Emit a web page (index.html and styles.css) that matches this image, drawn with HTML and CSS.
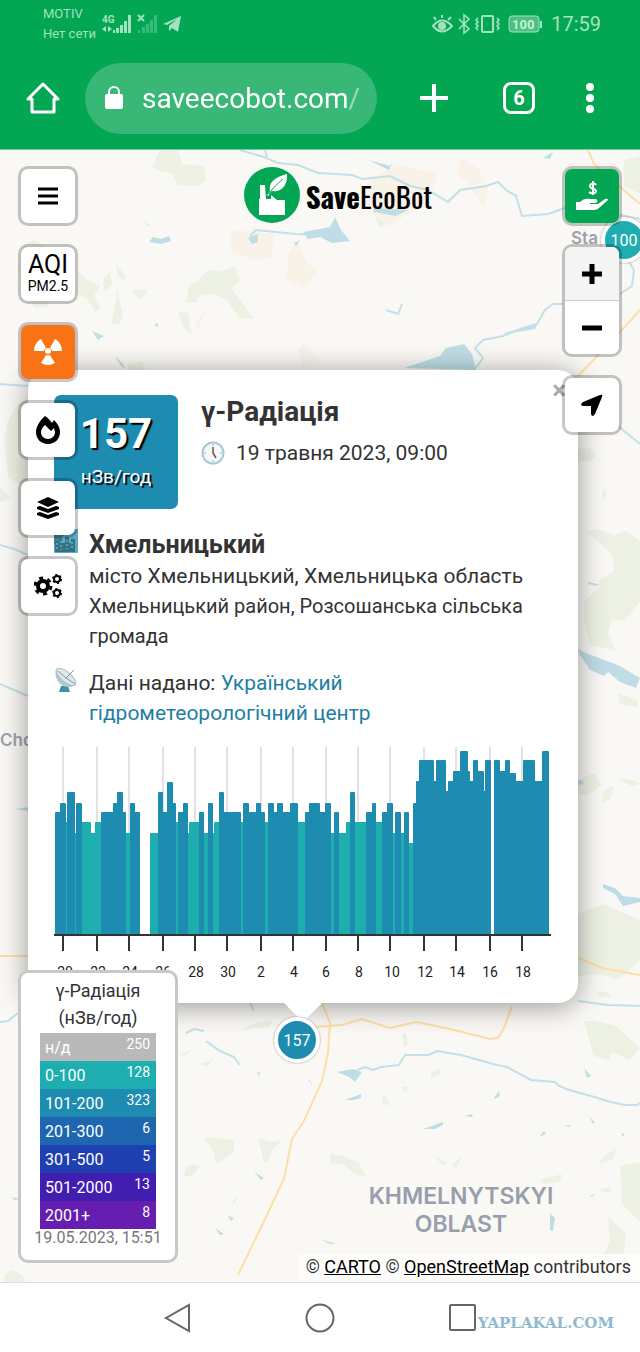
FILE: index.html
```html
<!DOCTYPE html>
<html lang="uk">
<head>
  <meta charset="UTF-8">
  <meta name="viewport" content="width=device-width, initial-scale=1">
  <title>SaveEcoBot</title>
  <link rel="stylesheet" href="styles.css">
</head>
<body>

  <header class="browser">
    <div class="status">
      <div class="carrier">MOTIV<br>Нет сети</div>
      <svg class="signal" width="82" height="24" viewBox="0 0 82 24">
        <text x="0" y="11" class="net">4G</text>
        <path d="M0 17l4-3v6zM10 17l-4-3v6zM11 18h2v3h-2zM14 16h3v5h-3zM18 13h3v8h-3zM22 9h3v12h-3zM26 3h3v18h-3z"/>
        <path d="M36 3l6 6M42 3l-6 6" stroke="#a3e2bf" stroke-width="2"/>
        <path opacity=".35" d="M36 18h2v3h-2zM40 15h3v6h-3zM44 12h3v9h-3zM48 8h3v13h-3zM52 3h3v18h-3z"/>
        <path d="M61 12L79 4 76 20 70 16 67 19V14L75 7 65 13z"/>
      </svg>
      <svg class="indicators" width="110" height="24" viewBox="0 0 110 24" fill="none" stroke="#a3e2bf" stroke-width="2">
        <path d="M1 14Q10 3 20 14Q10 25 1 14zM4 8L2 5M10 6V3M16 8l3-3"/>
        <circle cx="10" cy="14" r="3" fill="#a3e2bf"/>
        <path d="M27 7l10 10-5 4V3l5 4L27 17" stroke-width="1.6"/>
        <rect x="50" y="4" width="11" height="16" rx="1"/>
        <path d="M46 6l-2 2 2 2-2 2 2 2-2 2 2 2M65 6l2 2-2 2 2 2-2 2 2 2-2 2" stroke-width="1.6"/>
        <rect x="77" y="4" width="30" height="16" rx="3" stroke-width="1" fill="#4dbf83"/>
        <path d="M109 9v7"/>
        <text x="80" y="17" class="battery">100</text>
      </svg>
      <time class="clock">17:59</time>
    </div>
    <div class="toolbar">
      <button class="tool" aria-label="Home">
        <svg width="34" height="34" viewBox="0 0 34 34" fill="none" stroke="#fff" stroke-width="3" stroke-linejoin="round" stroke-linecap="round">
          <path d="M2 18L17 3 32 18H28V31H6V18z"/>
        </svg>
      </button>
      <div class="address">
        <svg width="20" height="26" viewBox="0 0 20 26">
          <path d="M5 10V7a5 5 0 0 1 10 0v3" fill="none" stroke="#fff" stroke-width="2"/>
          <rect x="1" y="9" width="18" height="15" rx="2" fill="#fff"/>
        </svg>
        <input type="text" value="saveecobot.com/" aria-label="Address">
      </div>
      <button class="tool plus" aria-label="New tab">
        <svg width="30" height="30" viewBox="0 0 30 30" stroke="#fff" stroke-width="4"><path d="M15 1v28M1 15h28"/></svg>
      </button>
      <button class="tool" aria-label="Tabs"><span class="tabs">6</span></button>
      <button class="tool more" aria-label="More">
        <svg width="10" height="30" viewBox="0 0 10 30" fill="#fff"><circle cx="5" cy="4" r="4"/><circle cx="5" cy="15" r="4"/><circle cx="5" cy="26" r="4"/></svg>
      </button>
    </div>
  </header>

  <main class="map">
    <svg class="tiles" viewBox="0 150 640 1132" preserveAspectRatio="xMidYMin slice">
      <!-- forests -->
      <g class="forest">
        <path d="M160 150h18l4 14 22 2 2 15-8 5-20-1-6-12-12-2-8-4z"/>
        <path d="M22 246l12-6 14 8v58l-14 2-16-40z"/>
        <path d="M78 272l10 8 12 6-6 10 6 12-4 4-10-14-8-4zM104 278l6-6 2 12-6 8-3-6zM116 264l10 12-2 4-6-4zM131 290l14-1 2 5-8 6zM117 290l6 26-4 8-8 1 4-20z"/>
        <path d="M208 270l15 1 12-5 5 14-8 9 22 30-14-1-14-18-12-6-14 2-4 7-10-1 3-16 8-4z"/>
        <path d="M178 312l10 1 4 22-8-6zM128 364l14-2 4 8h-18z"/>
        <path d="M624 160l16-4v38l-16-8zM374 215l6-4 5 15-6 1z"/>
        <path d="M578 449l12-1 6 8-6 5h-12zM604 488l3 6-2 6-3-6z"/>
        <path d="M586 532l12-3 16 6 12-4 14 10v60l-16 20-12-2-4 14 8 18-26-6-6-24v-20l16-14-2-6 16-10-2-16-14-14z"/>
        <path d="M618 693l20 8v6l-18-3zM578 780l16-7 8 12-14 10-10-1zM604 790l10-4-4 14-8 3zM616 778l18 2 6 4-8 2z"/>
        <path d="M578 914l26-10 36 16v40l-22 20-20-6-20 2z"/>
        <path d="M8 420l10-16 10-6v90l-20-10-4-40zM0 488l12 10-12 4z"/>
        <path d="M584 1021h12l20 5 24 22-10 12-18-8-2 8-16-4zM242 1028l18-6 12-1-2 6-26 3zM402 1034l4-1 2 12-4 3zM198 1064l10-3 6-4-6 10zM180 1054l10-4-4 6z"/>
        <path d="M204 1137l30 3v12l-18 12-2-11zM258 1138l12 4 12-2-10 10-4 12-4 1zM186 1168l6-4 8 2-8 10h-8zM431 1073l10-6-2 8-8 3zM402 1086l8 1-6 6zM384 1093l6 12-8-1z"/>
        <path d="M330 1154l14 2 14 6 8 14-10-1-12-10-14-2zM433 1155l14 8-4 3zM452 1164l10-7-6 12zM540 1180l22-6-2 8-16 2zM600 1160l17-13-4 12-12 5zM620 1166l20-4v60l-18-18zM608 1216l18 18-2 20h-20l6-12z"/>
        <path d="M60 1262l10-5 4 5zM5 1275l8-5 10 6 2 6H4zM596 1190l14-3 2 6zM596 993l10-2 6 6-12 1z"/>
      </g>
      <g class="sand">
        <path d="M230 230l44 4-2 24-18 2-22-8zM288 256l8-14 12 22 10 6-14 18-18-9 2-16zM462 158l16 10 8 14-16 4-14-14zM370 180l28-16 40 10-10 28-40 24-26-20zM472 190l16-4-4 22zM196 324l12-18-10 24zM298 350l6-8 18 22-20 4z"/>
      </g>
      <!-- lakes -->
      <g class="lake">
        <path d="M404 368l36-12 6-8 18-4 8 10 4 16zM320 229l10-2 5-10 6 13 9 11-18 2-12-6zM303 232l17-3v8l-12 2zM374 208l34 2-12 6-22-4zM248 238l10-4v8l-6 2zM153 237l8 2 8-3 2 5-10 3-12-2z"/>
        <path d="M143 221l8 5-3-1zM92 331l12 5-6 4zM115 356l8 8 3 5-5-3zM154 325l4-2v4zM368 160l22 6 3-4-4 8zM543 158l10-6-3 7zM294 243l6-3-4 6zM504 333l30-8 5-4-4 8-30 5z"/>
        <path d="M578 652l16 4 26 10 20 12-4 10-16-6-12-10-4 4-14-6zM603 884l12 4 8 8 17 2v4l-17 4-8-12-12-6zM337 1072l16-3 9 3-7 10-6-5zM345 1100l16-6v4l-8 2zM423 1129l20-7v3l-8 4zM464 1116l9-2-1 3zM494 1098l5-7 1 5-5 3zM584 1068l7 8-4 2zM539 1137l5-6 2 3zM564 1126l8-1-3 2zM589 1116l6 7-2 1zM550 1213l5 5-2 13-3-1z"/>
        <path d="M320 1239l16 5h-6zM254 1172l10 6-3 2zM215 1228l9 6-4 1zM228 1216l6 2-3 3zM232 1203l6-7-4 6zM320 1243l16 2zM12 1197l8 2-6 1zM15 809l14-2v4zM578 780l5 1v3l-5 1zM630 771l10-2zM257 1073l3-1-1 4zM307 1078l4 4 1 3zM590 1196l5-2-3 3zM622 1133l3 1-3 3z"/>
      </g>
      <g class="river">
        <path d="M240 150l24 7 14 6 20 2 20 8 34 2 10 4 28-3 20 10 18 4 20 12 12-12 26-4 12-4 8 8 10 6 6 20 26-2 28-10 8 4"/>
        <path d="M250 236l6-6 40 4 26 1M265 150l2 7M620 215l20 4M628 260l6 10-2 16-12 8M563 304l-10 0-8 6-8 14-14 4-20 8-20 4-8 8 8 10-6 8-6 6M386 310l12 4 4-10M618 426l22 18"/>
        <path d="M0 384l28 2M0 545l14 4 14 6M0 684l14 6 14 6M578 650l16 8M588 583l10 2M578 1001l30 4 32 1M0 1022l8-1 10-8M186 1033l8-4 10 2M206 1041l14 10 14 6 6 8M250 1003l4 8"/>
        <path d="M357 1070l8-3 8 3 8-3 18-2 6-10h24l8-4 24 4 36 10 10 2 24 13 24 2 4 4 10 4 22 6 20 6 14 3h12l3-2"/>
      </g>
      <g class="road">
        <path d="M588 150l6 14 46 40M640 310l-20 22-42 44M0 956h28M578 958l24 10 38 7M322 1003l8 20-2 30-6 28-18 40-12 18-8 40-18 38-28 58M316 1027l26-2 20-6 28 9 26-6 34 7 40 10 8-1 6-10 8-22"/>
      </g>
      <text x="571" y="244" class="place">Sta</text>
      <text x="0" y="746" class="place">Cho</text>
      <text x="461" y="1204" class="region">KHMELNYTSKYI</text>
      <text x="461" y="1232" class="region">OBLAST</text>
    </svg>

    <div class="logo">
      <svg width="56" height="56" viewBox="0 0 56 56">
        <circle cx="28" cy="28" r="28" fill="#02a653"/>
        <path d="M16 18h5l1 14h5V28l6 5h8v15H15V32h1z" fill="#fff"/>
        <path d="M26 25c-2-10 5-15 17-18 1 10-5 19-15 17l-4 5-1-1z" fill="#fff"/>
        <path d="M25 27c4-6 8-10 14-15" stroke="#02a653" fill="none"/>
      </svg>
      <span><b>Save</b>EcoBot</span>
    </div>

    <article class="popup">
      <button class="close" aria-label="Close">×</button>
      <div class="top">
        <div class="badge"><strong>157</strong><span>нЗв/год</span></div>
        <div>
          <h1>γ-Радіація</h1>
          <p class="date">
            <svg width="24" height="24" viewBox="0 0 24 24">
              <circle cx="12" cy="12" r="10.5" fill="#f3f7f8" stroke="#a5c9d3" stroke-width="2"/>
              <path d="M12 3v2M12 19v2M3 12h2M19 12h2" stroke="#9ab"/>
              <path d="M12 6v6l3 5" fill="none" stroke="#7d4b4b" stroke-width="1.5"/>
            </svg>
            19 травня 2023, 09:00
          </p>
        </div>
      </div>
      <div class="info">
        <svg width="24" height="24" viewBox="0 0 24 24">
          <rect width="24" height="24" rx="1" fill="#5cabc4"/>
          <path d="M0 0h16L0 16z" fill="#3a7f93"/>
          <path d="M1 23V12h4V9h3v5h3V8h4v6h2v-4h4v13z" fill="#347284"/>
          <path d="M3 14v7M7 12v9M13 11v9M18 13v8" stroke="#8cc9d6" stroke-dasharray="2 2"/>
        </svg>
        <div>
          <h2>Хмельницький</h2>
          <p>місто Хмельницький, Хмельницька область</p>
          <p class="small">Хмельницький район, Розсошанська сільська громада</p>
        </div>
      </div>
      <div class="info source">
        <svg width="24" height="26" viewBox="0 0 24 26">
          <path d="M7 18h7l2 6H5z" fill="#3b90ab"/>
          <path d="M2 1C-1 12 9 24 22 17z" fill="#b4c8ce"/>
          <ellipse cx="12" cy="9" rx="12" ry="5" transform="rotate(40 12 9)" fill="#dfe8ea" stroke="#a5bbc2"/>
          <path d="M12 10l8-8M12 10l9 6M12 10L4 3" fill="none" stroke="#8498a0"/>
        </svg>
        <p>Дані надано: <a href="#">Український гідрометеорологічний центр</a></p>
      </div>

      <svg class="chart" viewBox="54 745 497 236" role="img" aria-label="γ-Радіація, нЗв/год">
        <path class="grid" d="M63 747v188M97 747v188M129 747v188M163 747v188M195 747v188M227 747v188M261 747v188M293 747v188M326 747v188M358 747v188M390 747v188M424 747v188M456 747v188M490 747v188M522 747v188"/>
        <path class="low" d="M64 935V823H67V935zM74 935V834H77V935zM81 935V823H90V834H96V823H102V935zM126 935V834H131V935zM151 935V834H159V935zM174 935V823H178V935zM187 935V834H190V823H200V935zM203 935V834H208V935zM212 935V834H215V823H220V935zM240 935V823H244V935zM265 935V823H269V935zM298 935V823H306V935zM330 935V834H335V935zM338 935V834H347V823H351V935zM354 935V823H367V935zM375 935V823H383V935zM391 935V834H395V935zM400 935V834H405V935zM408 935V844H413V935z"/>
        <path class="mid" d="M56 935V813H61V804H65V935zM68 935V793H74V935zM77 935V804H81V935zM102 935V813H114V804H118V793H122V813H125V935zM131 935V804H134V813H139V935zM159 935V793H162V813H168V783H172V804H175V935zM179 935V813H184V804H187V935zM200 935V813H203V935zM209 935V804H212V935zM220 935V793H223V813H240V935zM244 935V804H248V813H257V804H260V813H264V935zM269 935V804H273V813H278V804H282V813H291V804H297V935zM306 935V813H310V804H319V813H326V804H330V935zM335 935V813H338V935zM351 935V793H354V935zM367 935V813H373V804H375V935zM383 935V813H388V804H392V935zM396 935V813H400V935zM405 935V813H408V935z"/>
        <path class="mid" d="M414 935V804H417V782H420V761H433V782H437V761H445V792H449V782H454V772H461V752H467V772H469V782H474V761H477V772H483V792H486V761H490V935zM495 935V761H499V772H506V761H509V774H515V782H524V761H534V782H543V752H548V935z"/>
        <path class="axis" d="M54 935h497M63 935v16M97 935v16M129 935v16M163 935v16M195 935v16M227 935v16M261 935v16M293 935v16M326 935v16M358 935v16M390 935v16M424 935v16M456 935v16M490 935v16M522 935v16"/>
        <g class="days">
          <text x="65" y="977">20</text><text x="98" y="977">22</text><text x="130" y="977">24</text><text x="163" y="977">26</text><text x="196" y="977">28</text>
          <text x="228" y="977">30</text><text x="261" y="977">2</text><text x="294" y="977">4</text><text x="326" y="977">6</text><text x="359" y="977">8</text>
          <text x="392" y="977">10</text><text x="425" y="977">12</text><text x="457" y="977">14</text><text x="490" y="977">16</text><text x="523" y="977">18</text>
        </g>
      </svg>
    </article>

    <button class="marker here">157</button>
    <button class="marker north">100</button>

    <div class="controls left">
      <button aria-label="Menu">
        <svg width="20" height="18" viewBox="0 0 20 18" stroke="#000" stroke-width="3"><path d="M0 2h20M0 9h20M0 16h20"/></svg>
      </button>
      <button class="aqi"><span>AQI</span><small>PM2.5</small></button>
      <button class="orange" aria-label="Radiation">
        <svg width="28" height="26" viewBox="0 0 28 26" fill="#fff">
          <circle cx="14" cy="12" r="3"/>
          <path d="M0 12C0 7 3 2 7 0l5 9q-2 1-2 3zM28 12C28 7 25 2 21 0l-5 9q2 1 2 3zM12 16q2 1 4 0l5 8q-7 4-14 0z"/>
        </svg>
      </button>
      <button aria-label="Fires">
        <svg width="26" height="28" viewBox="0 0 26 28">
          <path fill-rule="evenodd" d="M10 0c3 2 5 4 7 7l2-3c4 4 6 8 6 12 0 7-5 12-12 12S1 23 1 16C1 11 5 4 10 0zM10 9c-3 3-4 5-4 7 0 4 3 7 7 7s7-3 7-7l-1-4-3 3z"/>
        </svg>
      </button>
      <button aria-label="Layers">
        <svg width="22" height="22" viewBox="0 0 22 22">
          <path d="M11 0l11 5-11 5L0 5zM0 10l3-1 8 3 8-3 3 1v2l-11 4-11-4zM0 16l3-1 8 3 8-3 3 1v2l-11 4-11-4z"/>
        </svg>
      </button>
      <button aria-label="Settings">
        <svg width="28" height="24" viewBox="0 0 28 24" fill="none" stroke="#000">
          <circle cx="9" cy="12" r="5" stroke-width="4"/>
          <circle cx="9" cy="12" r="8" stroke-width="3" stroke-dasharray="4 4.4"/>
          <circle cx="23" cy="5" r="3" stroke-width="2"/>
          <circle cx="23" cy="5" r="4" stroke-width="2" stroke-dasharray="2 2.2"/>
          <circle cx="23" cy="19" r="3" stroke-width="2"/>
          <circle cx="23" cy="19" r="4" stroke-width="2" stroke-dasharray="2 2.2"/>
        </svg>
      </button>
    </div>

    <div class="controls right">
      <button class="green" aria-label="Donate">
        <svg width="34" height="30" viewBox="0 0 34 30">
          <path d="M21 4c-1-2-6-2-6 1 0 4 6 2 6 5s-5 3-7 1M18 0v14" fill="none" stroke="#fff" stroke-width="2"/>
          <path d="M1 21h4c3-3 6-4 10-3h6q3 2 0 4h-6v1h8l7-5q3-1 3 1l-9 8q-2 2-5 2H1z" fill="#fff"/>
        </svg>
      </button>
      <div class="zoom">
        <button aria-label="Zoom in"><svg width="20" height="20" viewBox="0 0 20 20" stroke="#000" stroke-width="5"><path d="M10 0v20M0 10h20"/></svg></button>
        <button aria-label="Zoom out"><svg width="20" height="20" viewBox="0 0 20 20" stroke="#000" stroke-width="5"><path d="M0 10h20"/></svg></button>
      </div>
      <button aria-label="Locate">
        <svg width="22" height="22" viewBox="0 0 22 22"><path d="M19 1q3-1 2 2l-7 17q-3 4-4 0v-8H2q-4-1 0-4z"/></svg>
      </button>
    </div>

    <aside class="legend">
      <table>
        <caption>γ-Радіація<br>(нЗв/год)</caption>
        <tbody>
          <tr class="c0"><th>н/д</th><td>250</td></tr>
          <tr class="c1"><th>0-100</th><td>128</td></tr>
          <tr class="c2"><th>101-200</th><td>323</td></tr>
          <tr class="c3"><th>201-300</th><td>6</td></tr>
          <tr class="c4"><th>301-500</th><td>5</td></tr>
          <tr class="c5"><th>501-2000</th><td>13</td></tr>
          <tr class="c6"><th>2001+</th><td>8</td></tr>
        </tbody>
      </table>
      <time>19.05.2023, 15:51</time>
    </aside>

    <div class="attribution">© <a href="#">CARTO</a> © <a href="#">OpenStreetMap</a> contributors</div>
  </main>

  <nav class="phone">
    <button aria-label="Back"><svg width="30" height="30" viewBox="0 0 30 30"><path d="M26 2v26L3 15z"/></svg></button>
    <button aria-label="Home"><svg width="30" height="30" viewBox="0 0 30 30"><circle cx="15" cy="15" r="13.5"/></svg></button>
    <button aria-label="Recent"><svg width="30" height="30" viewBox="0 0 30 30"><rect x="3" y="2" width="25" height="25" rx="1"/></svg></button>
    <span class="site">YAPLAKAL.COM</span>
  </nav>

</body>
</html>
```
FILE: styles.css
```css
* { box-sizing: border-box; }
body {
  margin: 0;
  min-height: 100vh;
  display: flex;
  flex-direction: column;
  font-family: Roboto, "Noto Sans", sans-serif;
  color: #333;
  background: #fff;
}
button {
  padding: 0;
  border: 0;
  background: none;
  font-family: inherit;
  display: flex;
  align-items: center;
  justify-content: center;
}
svg { flex: none; }
h1, h2, p { margin: 0; }

/* browser bar */
.browser {
  height: 150px;
  background: #02a653;
  border-bottom: 1px solid #6fd09c;
}
.status {
  display: flex;
  align-items: center;
  height: 48px;
  padding: 0 39px 0 43px;
  color: #a3e2bf;
}
.carrier {
  font-size: 13px;
  line-height: 20px;
  white-space: nowrap;
}
.signal { margin-left: 6px; fill: #a3e2bf; }
.net { font-size: 10px; font-weight: bold; }
.indicators { margin-left: auto; }
.battery { font-size: 13px; font-weight: bold; fill: #c4f0d6; stroke: none; }
.clock { margin-left: 9px; font-size: 20px; }
.toolbar {
  display: flex;
  align-items: center;
  gap: 25px;
  height: 100px;
  padding: 0 45px 0 26px;
}
.address {
  display: flex;
  align-items: center;
  gap: 18px;
  width: 292px;
  height: 71px;
  padding: 0 12px 0 19px;
  border-radius: 36px;
  background: #38b776;
}
.address input {
  flex: 1;
  min-width: 0;
  padding: 0;
  border: 0;
  background: none;
  color: #fff;
  font-family: inherit;
  font-size: 28px;
  mask-image: linear-gradient(to right, #000 204px, rgba(0,0,0,.5) 208px);
}
.plus { margin: 0 29px 0 17px; }
.more { margin-left: auto; }
.tabs {
  width: 32px;
  height: 32px;
  border: 3px solid #fff;
  border-radius: 8px;
  color: #fff;
  font-size: 20px;
  font-weight: bold;
  line-height: 26px;
}

/* map */
.map {
  position: relative;
  flex: 1;
  overflow: hidden;
  background: #faf8f4;
}
.tiles {
  position: absolute;
  inset: 0;
  width: 100%;
  height: 100%;
}
.forest { fill: #edf1e3; }
.sand { fill: #f8f2e9; }
.lake { fill: #bfdde6; }
.river { fill: none; stroke: #c2e0e8; stroke-width: 2; }
.road { fill: none; stroke: #fbdfa6; stroke-width: 2; }
.place { font: 600 17px Inter, sans-serif; fill: #9da1af; }
.region { font: 600 23px Inter, sans-serif; text-anchor: middle; fill: #989eac; }

.logo {
  position: relative;
  display: flex;
  align-items: center;
  justify-content: center;
  gap: 6px;
  height: 56px;
  margin: 17px 0 147px;
  padding-left: 36px;
  color: #000;
  font-family: Oswald, "Liberation Sans Narrow", "Roboto Condensed", Roboto, sans-serif;
  font-size: 29px;
}

.popup {
  position: relative;
  margin: 0 62px 0 28px;
  padding: 25px 27px 22px 26px;
  border-radius: 20px;
  background: #fff;
  box-shadow: 0 3px 28px rgba(0,0,0,.4);
  font-size: 21px;
  line-height: 30px;
}
.popup::after {
  content: "";
  position: absolute;
  left: 256px;
  top: 100%;
  border: 19px solid transparent;
  border-top-color: #fff;
  border-bottom: 0;
}
.close {
  position: absolute;
  top: 5px;
  right: 12px;
  color: #aaa;
  font-size: 26px;
  font-weight: bold;
  line-height: 30px;
}
.top { display: flex; gap: 23px; }
.badge {
  display: flex;
  flex-direction: column;
  align-items: center;
  width: 124px;
  height: 114px;
  padding-top: 14px;
  border-radius: 7px;
  background: #1e8bb0;
  color: #fff;
  text-shadow: 2px 2px 1px #000;
}
.badge strong { font-size: 42px; line-height: 50px; }
.badge span { font-size: 19px; line-height: 36px; }
h1 { font-size: 28px; line-height: 34px; }
.date {
  display: flex;
  align-items: center;
  gap: 11px;
  margin-top: 9px;
}
.info { display: flex; gap: 11px; margin-top: 20px; }
.info h2 { font-size: 25px; line-height: 32px; }
.small { font-size: 20px; }
.source { margin-top: 17px; }
.source a { color: #1e7fa3; text-decoration: none; }
.chart { display: block; width: 100%; margin-top: 17px; }
.grid { stroke: #e2e2e2; stroke-width: 2; }
.low, .mid { stroke-width: 2; stroke-linejoin: round; }
.low { fill: #1eaeb0; stroke: #1eaeb0; }
.mid { fill: #1e8bb0; stroke: #1e8bb0; }
.axis { stroke: #333; stroke-width: 2; }
.days { font-size: 14px; fill: #222; text-anchor: middle; }

.marker {
  position: absolute;
  width: 46px;
  height: 46px;
  border: 4px solid #fff;
  border-radius: 50%;
  box-shadow: 0 0 2px #888;
  color: #fff;
  font-size: 16px;
}
.here { left: 274px; top: 867px; background: #1e8bb0; }
.north { right: -7px; top: 67px; background: #1eaeb0; }

/* map buttons */
.controls {
  position: absolute;
  top: 16px;
  width: 60px;
  display: flex;
  flex-direction: column;
  gap: 18px;
}
.left { left: 18px; }
.right { right: 18px; }
.controls > * {
  min-height: 60px;
  border: 3px solid rgba(0,0,0,.22);
  border-radius: 10px;
  background: #fff;
  background-clip: padding-box;
  color: #000;
}
.controls .orange { background-color: #f97316; }
.controls .green { background-color: #02a653; }
.aqi { flex-direction: column; }
.aqi span { font-size: 25px; line-height: 24px; }
.aqi small { font-size: 14px; line-height: 18px; }
.zoom { overflow: hidden; }
.zoom button { width: 100%; height: 53px; }
.zoom button:first-child { height: 54px; background: #f4f4f4; border-bottom: 1px solid #ccc; }

.legend {
  position: absolute;
  left: 18px;
  bottom: 19px;
  width: 160px;
  display: flex;
  flex-direction: column;
  align-items: center;
  padding: 4px 0 13px;
  border: 3px solid #c8c8c8;
  border-radius: 10px;
  background: #fff;
}
.legend table {
  width: 116px;
  border-spacing: 0;
  color: #fff;
}
.legend caption {
  padding-bottom: 2px;
  color: #333;
  font-size: 18px;
  line-height: 27px;
}
.legend th, .legend td { height: 28px; padding: 0; }
.legend th { padding-left: 5px; font-size: 16px; font-weight: normal; text-align: left; }
.legend td { padding: 3px 6px 0 0; font-size: 14px; text-align: right; vertical-align: top; }
.c0 { background: #b9b9b9; }
.c1 { background: #1eaeb0; }
.c2 { background: #1e8bb0; }
.c3 { background: #1e66b0; }
.c4 { background: #1e40b0; }
.c5 { background: #411eb0; }
.c6 { background: #661eb0; }
.legend time {
  color: #777;
  font-size: 16px;
  line-height: 18px;
  white-space: nowrap;
}

.attribution {
  position: absolute;
  right: 0;
  bottom: 2px;
  padding: 0 9px 0 7px;
  background: rgba(255,255,255,.7);
  font-size: 18px;
  line-height: 26px;
}
.attribution a { color: #000; }

/* phone navigation */
.phone {
  position: relative;
  display: flex;
  align-items: center;
  justify-content: center;
  gap: 112px;
  height: 70px;
  border-top: 1px solid #ddd;
}
.phone svg { fill: none; stroke: #666; stroke-width: 2; }
.site {
  position: absolute;
  right: 26px;
  top: 30px;
  color: #8fb9d0;
  font: bold 15px/20px "DejaVu Serif", serif;
}
```
